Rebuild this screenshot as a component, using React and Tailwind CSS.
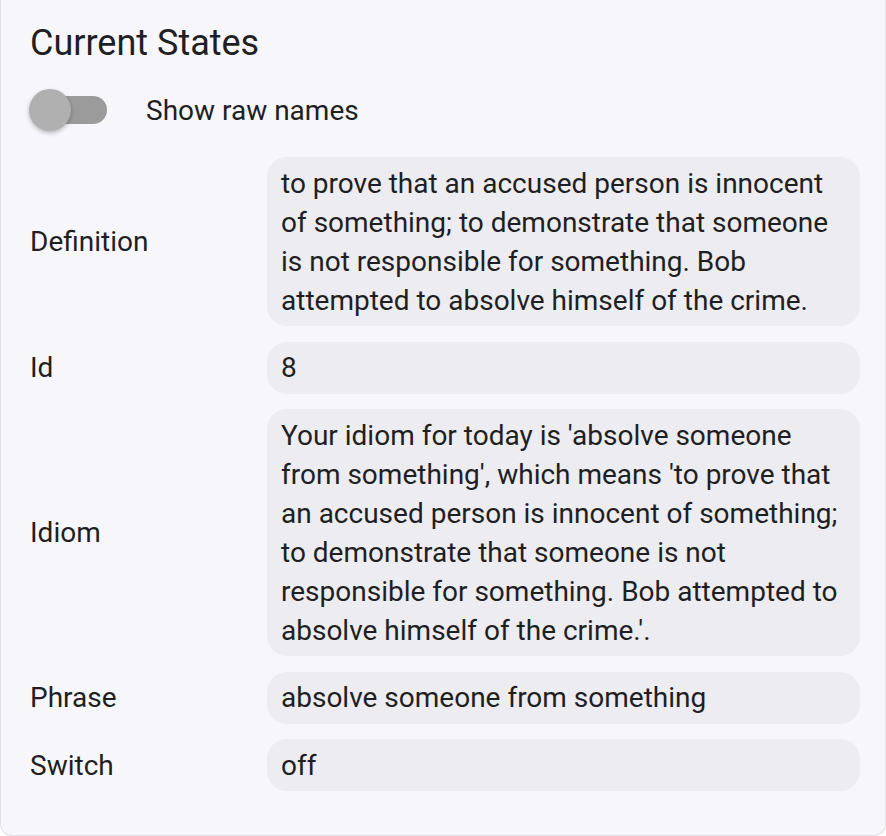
const rows = [
  {
    label: 'Definition',
    value:
      'to prove that an accused person is innocent of something; to demonstrate that someone is not responsible for something. Bob attempted to absolve himself of the crime.',
  },
  { label: 'Id', value: '8' },
  {
    label: 'Idiom',
    value:
      "Your idiom for today is 'absolve someone from something', which means 'to prove that an accused person is innocent of something; to demonstrate that someone is not responsible for something. Bob attempted to absolve himself of the crime.'.",
  },
  { label: 'Phrase', value: 'absolve someone from something' },
  { label: 'Switch', value: 'off' },
]

const Toggle = () => {
  return (
    <div className="relative w-[78px] h-[42px] shrink-0">
      <div className="absolute left-[8px] right-0 top-[7px] h-[28px] rounded-full bg-[#9b9b9b]" />
      <div className="absolute left-0 top-0 w-[42px] h-[42px] rounded-full bg-[#b0b0b0] shadow-[0_2px_4px_rgba(0,0,0,0.25)]" />
    </div>
  )
}

export default function App() {
  return (
    <div className="bg-white min-h-screen" style={{ fontFamily: 'Roboto, "Noto Sans", sans-serif' }}>
      <div className="w-[886px] bg-[#f7f7fb] border-x border-b border-[#e2e2e6] rounded-b-[12px] pl-[29px] pr-[25px] pt-[22px] pb-[44px] text-[#1f1f23]">
        <h1 className="text-[36px] leading-[43px] font-normal">Current States</h1>

        <div className="flex items-center mt-[24px] -ml-px">
          <Toggle />
          <span className="ml-[39px] text-[28px] leading-[39px]">Show raw names</span>
        </div>

        <div className="mt-[26px] flex flex-col gap-[15.5px]">
          {rows.map((row) => (
            <div key={row.label} className="flex items-center">
              <div className="w-[237px] shrink-0 text-[28px] leading-[39px]">{row.label}</div>
              <div className="flex-1 bg-[#ececf1] rounded-[20px] px-[14px] py-[6.5px] text-[28px] leading-[39px]">
                {row.value}
              </div>
            </div>
          ))}
        </div>
      </div>
    </div>
  )
}
